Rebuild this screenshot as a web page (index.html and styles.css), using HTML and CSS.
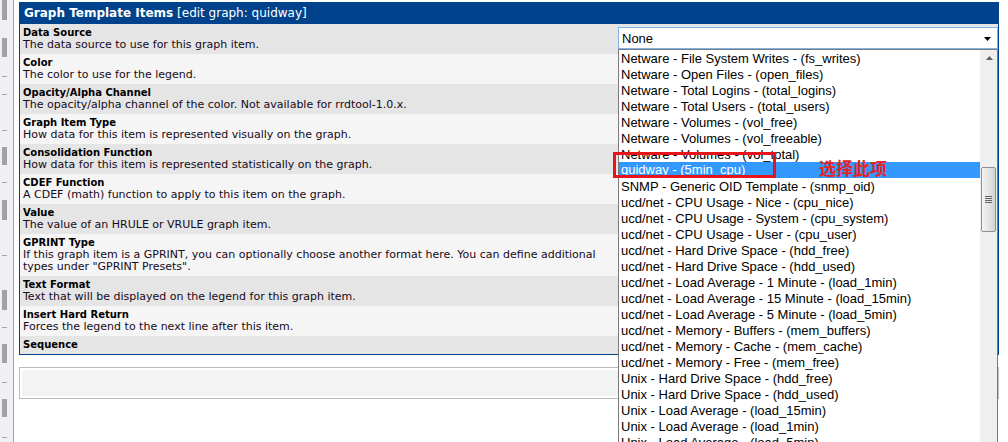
FILE: index.html
```html
<!DOCTYPE html>
<html>
<head>
<meta charset="utf-8">
<link rel="stylesheet" href="styles.css">
</head>
<body>
<div class="page">
  <div class="strip"></div>
  <div class="main">
    <div class="panel">
      <div class="panel-head"><b>Graph Template Items</b> [edit graph: quidway]</div>
      <div class="row dark">
        <div class="lcell"><div class="ttl">Data Source</div><div class="desc">The data source to use for this graph item.</div></div>
        <div class="rcell">
          <div class="select-wrap">
            <div class="select"><span>None</span><svg class="arrow" width="7" height="4" viewBox="0 0 7 4"><path d="M0 0H7L3.5 4Z" fill="#000"/></svg></div>
            <div class="list">
              <div class="items">
                <div class="opt">Netware - File System Writes - (fs_writes)</div>
                <div class="opt">Netware - Open Files - (open_files)</div>
                <div class="opt">Netware - Total Logins - (total_logins)</div>
                <div class="opt">Netware - Total Users - (total_users)</div>
                <div class="opt">Netware - Volumes - (vol_free)</div>
                <div class="opt">Netware - Volumes - (vol_freeable)</div>
                <div class="opt">Netware - Volumes - (vol_total)</div>
                <div class="opt sel">quidway - (5min_cpu)</div>
                <div class="opt">SNMP - Generic OID Template - (snmp_oid)</div>
                <div class="opt">ucd/net - CPU Usage - Nice - (cpu_nice)</div>
                <div class="opt">ucd/net - CPU Usage - System - (cpu_system)</div>
                <div class="opt">ucd/net - CPU Usage - User - (cpu_user)</div>
                <div class="opt">ucd/net - Hard Drive Space - (hdd_free)</div>
                <div class="opt">ucd/net - Hard Drive Space - (hdd_used)</div>
                <div class="opt">ucd/net - Load Average - 1 Minute - (load_1min)</div>
                <div class="opt">ucd/net - Load Average - 15 Minute - (load_15min)</div>
                <div class="opt">ucd/net - Load Average - 5 Minute - (load_5min)</div>
                <div class="opt">ucd/net - Memory - Buffers - (mem_buffers)</div>
                <div class="opt">ucd/net - Memory - Cache - (mem_cache)</div>
                <div class="opt">ucd/net - Memory - Free - (mem_free)</div>
                <div class="opt">Unix - Hard Drive Space - (hdd_free)</div>
                <div class="opt">Unix - Hard Drive Space - (hdd_used)</div>
                <div class="opt">Unix - Load Average - (load_15min)</div>
                <div class="opt">Unix - Load Average - (load_1min)</div>
                <div class="opt">Unix - Load Average - (load_5min)</div>
              </div>
              <div class="sbar">
                <div class="sbtn"><svg width="7" height="4" viewBox="0 0 7 4"><path d="M3.5 0L7 4H0Z" fill="#606060"/></svg></div>
                <div class="thumb"><span></span><span></span><span></span><span></span></div>
              </div>
            </div>
          </div>
        </div>
      </div>
      <div class="row light">
        <div class="lcell"><div class="ttl">Color</div><div class="desc">The color to use for the legend.</div></div><div class="rcell"></div>
      </div>
      <div class="row dark">
        <div class="lcell"><div class="ttl">Opacity/Alpha Channel</div><div class="desc">The opacity/alpha channel of the color. Not available for rrdtool-1.0.x.</div></div><div class="rcell"></div>
      </div>
      <div class="row light">
        <div class="lcell"><div class="ttl">Graph Item Type</div><div class="desc">How data for this item is represented visually on the graph.</div></div><div class="rcell"></div>
      </div>
      <div class="row dark">
        <div class="lcell"><div class="ttl">Consolidation Function</div><div class="desc">How data for this item is represented statistically on the graph.</div></div><div class="rcell"></div>
      </div>
      <div class="row light">
        <div class="lcell"><div class="ttl">CDEF Function</div><div class="desc">A CDEF (math) function to apply to this item on the graph.</div></div><div class="rcell"></div>
      </div>
      <div class="row dark">
        <div class="lcell"><div class="ttl">Value</div><div class="desc">The value of an HRULE or VRULE graph item.</div></div><div class="rcell"></div>
      </div>
      <div class="row light">
        <div class="lcell"><div class="ttl">GPRINT Type</div><div class="desc nowrap">If this graph item is a GPRINT, you can optionally choose another format here. You can define additional<br>types under "GPRINT Presets".</div></div><div class="rcell"></div>
      </div>
      <div class="row dark">
        <div class="lcell"><div class="ttl">Text Format</div><div class="desc">Text that will be displayed on the legend for this graph item.</div></div><div class="rcell"></div>
      </div>
      <div class="row light">
        <div class="lcell"><div class="ttl">Insert Hard Return</div><div class="desc">Forces the legend to the next line after this item.</div></div><div class="rcell"></div>
      </div>
      <div class="row dark">
        <div class="lcell"><div class="ttl">Sequence</div></div><div class="rcell"></div>
      </div>
    </div>
    <div class="footer-box"><div class="footer-inner"></div></div>
  </div>
</div>
<div class="note-box"></div>
<div class="note-text">选择此项</div>
</body>
</html>
```
FILE: styles.css
```css
html, body {
  margin: 0;
  padding: 0;
}
body {
  width: 1008px;
  height: 442px;
  overflow: hidden;
  position: relative;
  background: #fff;
  font-family: "DejaVu Sans", Verdana, sans-serif;
  color: #000;
}
.page {
  display: flex;
  height: 442px;
}
.strip {
  width: 13px;
  height: 442px;
  border-right: 1px solid #a3a3a3;
  background-color: #eef0f3;
  background-repeat: no-repeat;
  background-image:
    linear-gradient(#a2a2a2, #a2a2a2), linear-gradient(#a2a2a2, #a2a2a2),
    linear-gradient(#a2a2a2, #a2a2a2), linear-gradient(#a2a2a2, #a2a2a2),
    linear-gradient(#a2a2a2, #a2a2a2), linear-gradient(#a2a2a2, #a2a2a2),
    linear-gradient(#a2a2a2, #a2a2a2),
    linear-gradient(#a8a8a8, #a8a8a8), linear-gradient(#a8a8a8, #a8a8a8),
    linear-gradient(#a8a8a8, #a8a8a8), linear-gradient(#a8a8a8, #a8a8a8),
    linear-gradient(#a8a8a8, #a8a8a8), linear-gradient(#a8a8a8, #a8a8a8),
    linear-gradient(#a8a8a8, #a8a8a8), linear-gradient(#a8a8a8, #a8a8a8);
  background-size:
    5px 20px, 5px 19px, 5px 18px, 5px 20px, 5px 20px, 5px 19px, 5px 18px,
    5px 1px, 5px 1px, 5px 1px, 5px 1px, 5px 1px, 5px 1px, 5px 1px, 5px 1px;
  background-position:
    2px 0, 2px 38px, 2px 147px, 2px 200px, 2px 290px, 2px 344px, 2px 399px,
    2px 76px, 2px 94px, 2px 130px, 2px 182px, 2px 255px, 2px 327px, 2px 382px, 2px 437px;
}
.main {
  margin-left: 5px;
  width: 980px;
  padding-top: 2px;
}
.panel {
  border: 1px solid #00438c;
}
.panel-head {
  height: 21px;
  line-height: 21px;
  background: #00438c;
  color: #fff;
  font-size: 12px;
  padding-left: 4px;
  white-space: nowrap;
}
.row {
  display: grid;
  grid-template-columns: 596px 1fr;
}
.row.dark { background: #e5e5e5; }
.row.light { background: #f5f5f5; }
.lcell {
  padding: 3px 0 3px 3px;
  line-height: 12px;
}
.ttl {
  font-size: 10px;
  font-weight: bold;
}
.desc {
  font-size: 11px;
  color: #150a20;
}
.nowrap { white-space: nowrap; }
.rcell {
  padding: 3px 0 0 2px;
}
.select-wrap {
  position: relative;
  width: 380px;
}
.select {
  box-sizing: border-box;
  height: 22px;
  border: 1px solid #7eb4ea;
  background: #fff;
  display: flex;
  align-items: center;
  justify-content: space-between;
  padding: 0 6px 0 3px;
  font-family: "Liberation Sans", Arial, sans-serif;
  font-size: 13px;
}
.arrow { margin-top: 1px; }
.list {
  position: absolute;
  top: 22px;
  left: 0;
  width: 380px;
  height: 420px;
  box-sizing: border-box;
  border: 1px solid #7a7a7a;
  background: #fff;
  display: flex;
  z-index: 2;
}
.items {
  width: 361px;
  font-family: "Liberation Sans", Arial, sans-serif;
  font-size: 13px;
}
.opt {
  box-sizing: border-box;
  height: 16px;
  line-height: 16px;
  padding: 1px 0 0 2px;
  white-space: nowrap;
}
.opt.sel {
  background: #3399ff;
  color: #fff;
  border: 1px dotted #b8753a;
  line-height: 14px;
  padding: 0 0 0 1px;
}
.sbar {
  width: 17px;
  background: #efefef;
  display: flex;
  flex-direction: column;
}
.sbtn {
  height: 16px;
  display: flex;
  align-items: center;
  justify-content: center;
  padding-left: 1px;
}
.thumb {
  margin: 101px 0 0 1px;
  width: 15px;
  height: 65px;
  box-sizing: border-box;
  border: 1px solid #8f8f8f;
  border-radius: 2px;
  background: linear-gradient(to right, #f4f4f4, #e2e2e2 60%, #d2d2d2);
  display: flex;
  flex-direction: column;
  align-items: center;
  justify-content: center;
  gap: 1px;
}
.thumb span {
  width: 7px;
  height: 1px;
  background: #666;
}
.footer-box {
  margin-top: 12px;
  border: 1px solid #bbbbbb;
  padding: 2px;
}
.footer-inner {
  height: 26px;
  background: #f3f3f3;
}
.note-box {
  position: absolute;
  left: 613px;
  top: 152px;
  width: 163px;
  height: 26px;
  box-sizing: border-box;
  border: 3px solid #e8141c;
  z-index: 3;
}
.note-text {
  position: absolute;
  left: 819px;
  top: 158px;
  font-family: "Noto Sans CJK SC", sans-serif;
  font-weight: bold;
  font-size: 17px;
  line-height: 20px;
  color: #e62222;
  z-index: 3;
}
```
